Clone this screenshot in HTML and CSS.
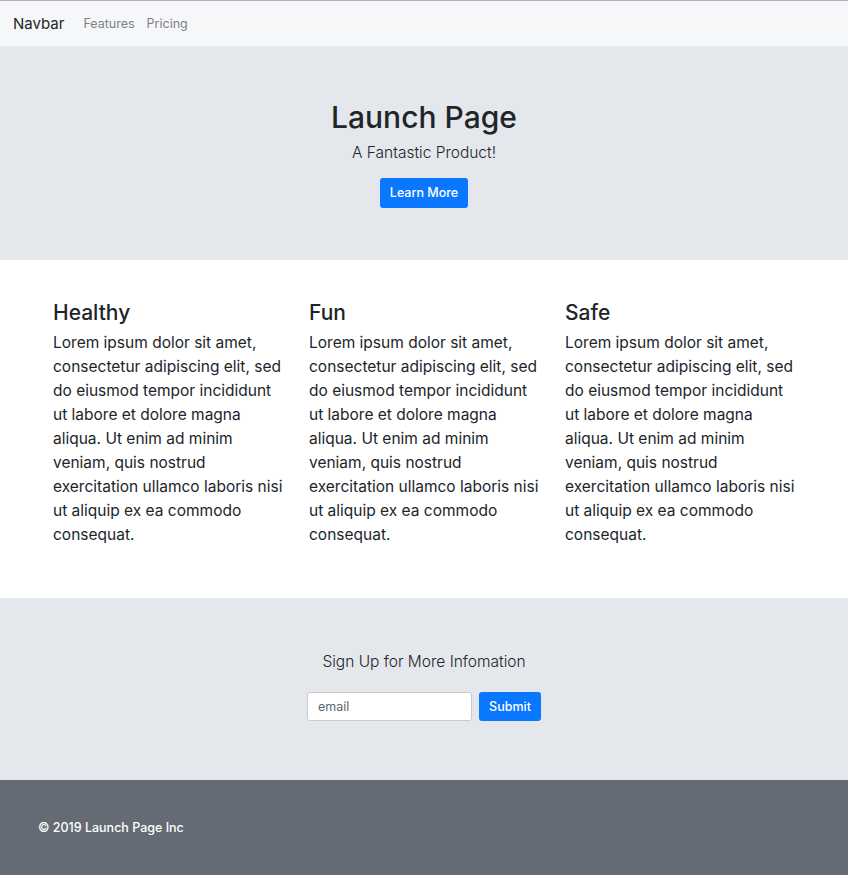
FILE: index.html
```
<!DOCTYPE html>
<html lang="en">
<head>
<meta charset="utf-8">
<title>Launch Page</title>
<link rel="stylesheet" href="styles.css">
</head>
<body>
<nav class="navbar">
  <a class="brand" href="#">Navbar</a>
  <a class="nav-link" href="#">Features</a>
  <a class="nav-link" href="#">Pricing</a>
</nav>
<header class="hero">
  <h1 class="hero-title">Launch Page</h1>
  <p class="hero-sub">A Fantastic Product!</p>
  <a class="btn" href="#">Learn More</a>
</header>
<section class="features">
  <div class="feature">
    <h3 class="feature-title">Healthy</h3>
    <p class="feature-text">Lorem ipsum dolor sit amet, consectetur adipiscing elit, sed do eiusmod tempor incididunt ut labore et dolore magna aliqua. Ut enim ad minim veniam, quis nostrud exercitation ullamco laboris nisi ut aliquip ex ea commodo consequat.</p>
  </div>
  <div class="feature">
    <h3 class="feature-title">Fun</h3>
    <p class="feature-text">Lorem ipsum dolor sit amet, consectetur adipiscing elit, sed do eiusmod tempor incididunt ut labore et dolore magna aliqua. Ut enim ad minim veniam, quis nostrud exercitation ullamco laboris nisi ut aliquip ex ea commodo consequat.</p>
  </div>
  <div class="feature">
    <h3 class="feature-title">Safe</h3>
    <p class="feature-text">Lorem ipsum dolor sit amet, consectetur adipiscing elit, sed do eiusmod tempor incididunt ut labore et dolore magna aliqua. Ut enim ad minim veniam, quis nostrud exercitation ullamco laboris nisi ut aliquip ex ea commodo consequat.</p>
  </div>
</section>
<section class="signup">
  <h4 class="signup-title">Sign Up for More Infomation</h4>
  <form class="signup-form">
    <input class="input" type="email" placeholder="email">
    <button class="btn btn-submit" type="button">Submit</button>
  </form>
</section>
<footer class="footer">
  <p class="footer-text">© 2019 Launch Page Inc</p>
</footer>
</body>
</html>
```
FILE: styles.css
```
* { box-sizing: border-box; }
html, body { margin: 0; padding: 0; }
body {
  font-family: Inter, "Noto Sans", sans-serif;
  color: #212529;
  font-size: 16px;
  line-height: 1.5;
  background: #fff;
  height: 875px;
  display: flex;
  flex-direction: column;
}
a { text-decoration: none; }

.navbar {
  border-top: 1px solid #b2b1b6;
  background: #f6f7f9;
  height: 46px;
  display: flex;
  align-items: center;
  padding: 2px 13px 0;
  flex-shrink: 0;
}
.brand {
  color: #212529;
  font-size: 15px;
  margin-right: 19px;
}
.nav-link {
  color: #7c8186;
  font-size: 12.5px;
  margin-right: 12px;
}

.hero {
  background: #e4e7eb;
  height: 214px;
  display: flex;
  flex-direction: column;
  align-items: center;
  padding-top: 53px;
  flex-shrink: 0;
}
.hero-title {
  margin: 0;
  font-size: 30px;
  font-weight: 500;
  line-height: 36px;
}
.hero-sub {
  margin: 8px 0 0;
  font-size: 15.5px;
  font-weight: 300;
  line-height: 20px;
}
.btn {
  display: inline-flex;
  align-items: center;
  justify-content: center;
  background: #0a77ff;
  color: #fff;
  border: none;
  border-radius: 3px;
  font-family: inherit;
  font-size: 12.5px;
  font-weight: 500;
  height: 30px;
  padding: 0 10px;
  margin-top: 15px;
}

.features {
  display: grid;
  grid-template-columns: repeat(3, 256px);
  justify-content: center;
  padding: 39px 0 36px 0;
  flex-shrink: 0;
  height: 338px;
}
.feature { padding: 0 13px; }
.feature-title {
  margin: 0 0 4px;
  font-size: 21px;
  font-weight: 500;
  line-height: 28px;
}
.feature-text {
  margin: 0;
  font-size: 15.5px;
  line-height: 24px;
}

.signup {
  background: #e4e7eb;
  height: 182px;
  display: flex;
  flex-direction: column;
  align-items: center;
  padding-top: 53px;
  flex-shrink: 0;
}
.signup-title {
  margin: 0;
  font-size: 15.5px;
  font-weight: 300;
  line-height: 22px;
}
.signup-form {
  display: flex;
  gap: 7px;
  margin-top: 19px;
}
.input {
  width: 165px;
  height: 29px;
  border: 1px solid #c8ccd0;
  border-radius: 3px;
  background: #fff;
  padding: 0 10px;
  font-family: inherit;
  font-size: 12.5px;
  color: #495057;
}
.input::placeholder { color: #5f656b; }
.btn-submit {
  margin-top: 0;
  height: 29px;
  width: 62px;
  padding: 0;
}

.footer {
  background: #646b75;
  flex: 1;
  display: flex;
  align-items: center;
  padding: 2px 38px 0;
}
.footer-text {
  margin: 0;
  color: #fff;
  font-size: 12.5px;
  font-weight: 500;
}
```
